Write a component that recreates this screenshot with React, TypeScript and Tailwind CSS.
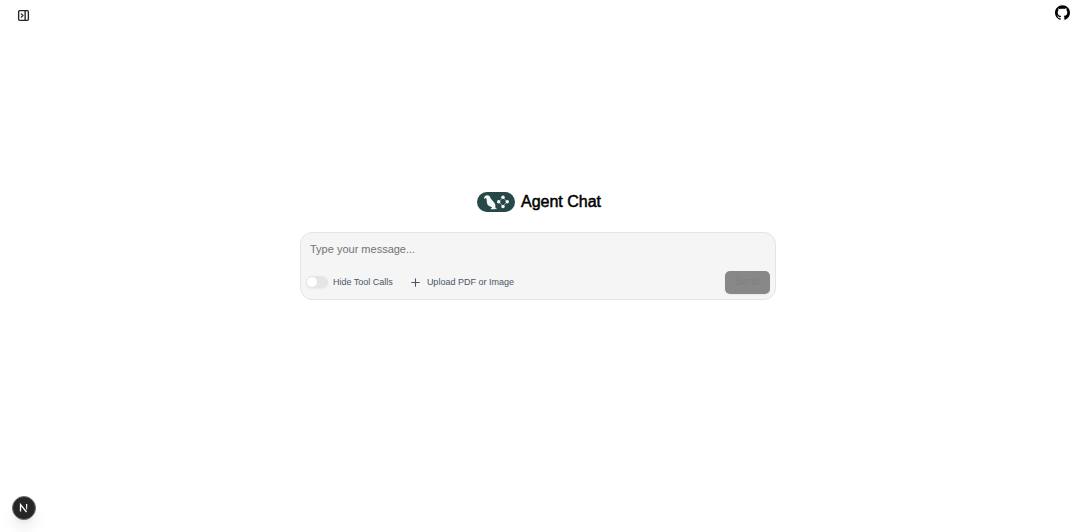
import { useState } from "react";
import { PanelRightClose, Plus } from "lucide-react";
import { SiGithub } from "react-icons/si";

function AgentLogo() {
  return (
    <svg viewBox="0 0 98 51" className="h-5 w-[38px]" aria-hidden="true">
      <rect width="98" height="51" rx="25.5" fill="#264849" />
      <path
        d="M18 15c1-4 4-7 8-7 5 0 8 3 9 8l10 12c3 4 3 8 2 11l5 5-6-1 1 1H35c1-2 2-3 4-4l-3-2c-8-2-11-8-11-15 0-3 0-5-2-8l-4 2z"
        fill="#f4f8f6"
      />
      <path
        d="M67 14 78 25 67 36 56 25z"
        fill="none"
        stroke="#a8b8b6"
        strokeWidth="2"
      />
      <g fill="#f4f8f6">
        <circle cx="67" cy="13" r="4.5" />
        <circle cx="78" cy="25" r="4.5" />
        <circle cx="67" cy="37" r="4.5" />
        <circle cx="56" cy="25" r="4.5" />
      </g>
    </svg>
  );
}

export default function App() {
  const [message, setMessage] = useState("");
  const [hideToolCalls, setHideToolCalls] = useState(false);

  return (
    <div className="flex min-h-screen flex-col bg-white pr-1 font-['Liberation_Sans',Arial,sans-serif] text-black">
      <header className="flex items-start justify-between pt-1 pr-1.5 pl-4">
        <button type="button" aria-label="Open chat history" className="mt-1 p-px">
          <PanelRightClose className="size-[13px] text-neutral-800" strokeWidth={2.5} />
        </button>
        <a href="https://github.com" aria-label="GitHub repository" className="mt-px">
          <SiGithub className="size-[15px]" />
        </a>
      </header>

      <main className="flex flex-1 flex-col items-center justify-center px-4 pb-[30px]">
        <div className="flex items-center gap-1.5 pl-0.5">
          <AgentLogo />
          <h1 className="text-base leading-6 font-normal [-webkit-text-stroke:0.5px_black]">
            Agent Chat
          </h1>
        </div>
        <form
          className="mt-[18px] w-full max-w-[476px] rounded-xl border border-neutral-200 bg-neutral-100 px-[5px] pt-2 pb-[5px]"
          onSubmit={(event) => event.preventDefault()}
        >
          <textarea
            rows={1}
            aria-label="Message"
            placeholder="Type your message..."
            value={message}
            onChange={(event) => setMessage(event.target.value)}
            className="block h-[30px] w-full resize-none bg-transparent px-1 text-[11px] leading-4 outline-none placeholder:text-neutral-500"
          />
          <div className="flex items-center gap-4 text-[9px] leading-4 text-gray-600">
            <label className="flex items-center gap-[5px]">
              <input
                type="checkbox"
                role="switch"
                checked={hideToolCalls}
                onChange={(event) => setHideToolCalls(event.target.checked)}
                className="h-3 w-[22px] appearance-none rounded-full bg-neutral-200 shadow-xs before:block before:size-3 before:rounded-full before:border before:border-neutral-200 before:bg-white checked:bg-neutral-800 checked:before:translate-x-2.5"
              />
              Hide Tool Calls
            </label>
            <button type="button" className="flex items-center gap-[5px]">
              <Plus className="size-[13px]" strokeWidth={2} />
              Upload PDF or Image
            </button>
            <button
              type="submit"
              disabled
              className="ml-auto h-[23px] w-[45px] rounded-[5px] bg-[#888888] text-[10px] text-[#808080] shadow-xs"
            >
              Send
            </button>
          </div>
        </form>
      </main>

      <footer className="flex px-3 pb-3">
        <button
          type="button"
          aria-label="Open developer tools"
          className="flex size-6 items-center justify-center rounded-full border border-neutral-500 bg-neutral-800 shadow-lg"
        >
          <svg viewBox="0 0 12 12" className="size-3" fill="none" aria-hidden="true">
            <defs>
              <linearGradient id="fade" x1="0" y1="0" x2="0" y2="1">
                <stop offset="0.5" stopColor="#fff" />
                <stop offset="1" stopColor="#fff" stopOpacity="0.3" />
              </linearGradient>
            </defs>
            <path d="M2.5 9.5V2.5L8.5 10" stroke="#fff" strokeWidth="1.3" />
            <path d="M8 2h1.2v6H8z" fill="url(#fade)" />
          </svg>
        </button>
      </footer>
    </div>
  );
}
